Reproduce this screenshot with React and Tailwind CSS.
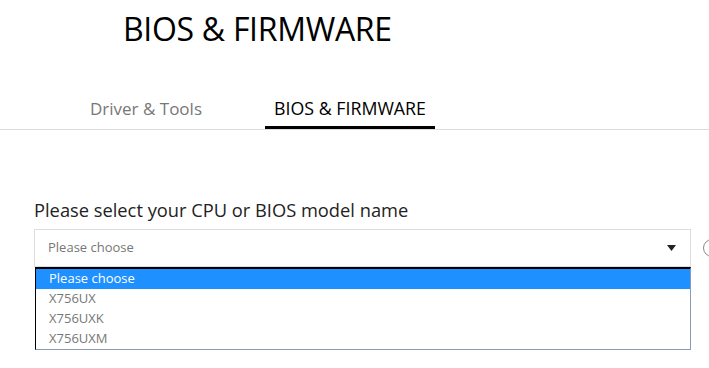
import React from "react";

const options = ["Please choose", "X756UX", "X756UXK", "X756UXM"];

const App = () => {
  return (
    <div
      className="w-[709px] h-[368px] bg-white overflow-hidden"
      style={{ fontFamily: '"Open Sans", "Noto Sans", sans-serif' }}
    >
      <h1 className="pt-[9px] pl-[123px] text-[32px] leading-[40px] text-black tracking-[-0.3px]">
        BIOS &amp; FIRMWARE
      </h1>

      <div className="mt-[42px] flex border-b border-[#dddddd]">
        <div className="ml-[90px] w-[175px] h-[38px] text-[17px] text-[#777777] leading-[35px]">
          Driver &amp; Tools
        </div>
        <div className="w-[170px] h-[38px] text-[17.8px] text-black leading-[35px] text-center border-b-[3px] border-black -mb-px">
          BIOS &amp; FIRMWARE
        </div>
      </div>

      <div className="pl-[34px] pt-[61px]">
        <p className="text-[18.3px] leading-[38px] text-[#222222]">
          Please select your CPU or BIOS model name
        </p>
        <div className="flex items-center">
          <div className="shrink-0 w-[657px] h-[38px] border border-[#dedede] flex items-center justify-between pl-[13px] pr-[14px]">
            <span className="text-[13px] text-[#777777]">Please choose</span>
            <svg width="9" height="6" viewBox="0 0 9 6">
              <path d="M0 0 L9 0 L4.5 6 Z" fill="#222" />
            </svg>
          </div>
          <div className="ml-[12px] w-[18px] h-[18px] rounded-full border border-[#888888] shrink-0" />
        </div>
        <ul className="ml-px w-[656px] border-t-2 border-l border-t-black border-l-black border-r border-b border-r-[#8b9bb6] border-b-[#8b9bb6]">
          {options.map((o, i) => (
            <li
              key={o}
              className={
                "h-[20px] pl-[13px] text-[13px] leading-[19px] " +
                (i === 0 ? "bg-[#1e90ff] text-white" : "text-[#777777]")
              }
            >
              {o}
            </li>
          ))}
        </ul>
      </div>
    </div>
  );
};

export default App;
